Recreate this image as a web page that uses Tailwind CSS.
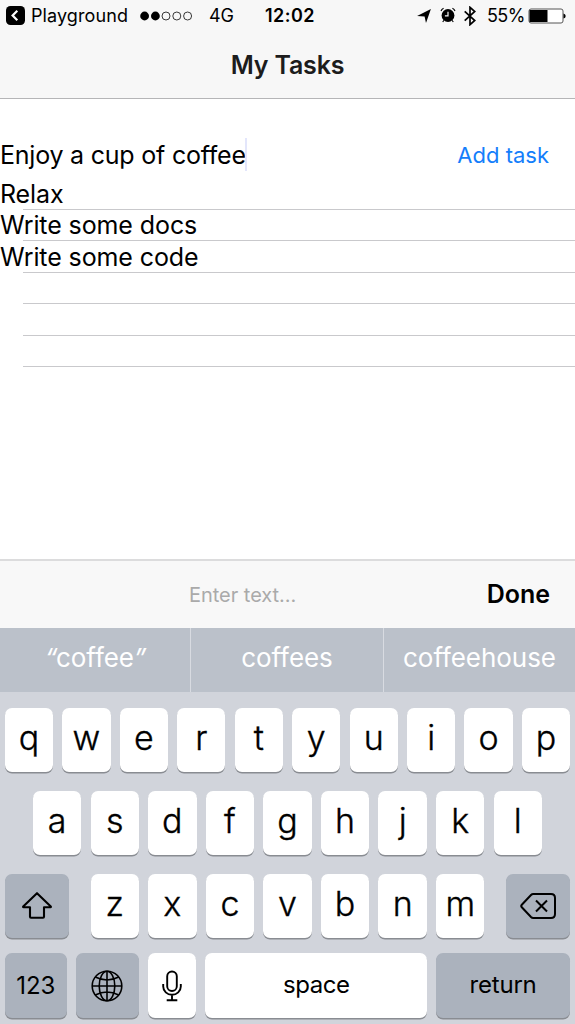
<!DOCTYPE html>
<html lang="en">
<head>
<meta charset="utf-8">
<meta name="viewport" content="width=device-width, initial-scale=1">
<title>My Tasks</title>
<script src="https://cdn.jsdelivr.net/npm/@tailwindcss/browser@4"></script>
</head>
<body class="w-[575px] h-[1024px] overflow-hidden bg-white text-black font-['Inter','Liberation_Sans',sans-serif] flex flex-col whitespace-nowrap">

<header class="h-[99px] shrink-0 bg-[#f7f7f7] border-b border-[#b5b5b7] flex flex-col">
  <div class="h-8 flex items-center text-[18px] leading-8">
    <svg class="ml-[6px] -mt-[2px] w-[19px] h-[19px] shrink-0" viewBox="0 0 19 19"><rect width="19" height="19" rx="4.5"/><path d="M11.3 4.8 6.6 9.5l4.7 4.7" fill="none" stroke="#fff" stroke-width="2.2"/></svg>
    <div class="ml-[6px] w-[109px] tracking-[0.100px]">Playground</div>
    <svg class="w-[53px] h-[10px] shrink-0" viewBox="0 0 53 10"><circle cx="4.6" cy="5" r="4.4"/><circle cx="15.4" cy="5" r="4.4"/><g fill="none" stroke="#222" stroke-width="0.9"><circle cx="26" cy="5" r="4"/><circle cx="36.8" cy="5" r="4"/><circle cx="47.6" cy="5" r="4"/></g></svg>
    <div class="ml-[16px] w-[56px] tracking-[-0.2px]">4G</div>
    <div class="w-[152px] font-semibold tracking-[0.450px]">12:02</div>
    <svg class="w-[14px] h-[14px] shrink-0" viewBox="0 0 14 14"><path d="M13.900 0 9 13.900 7.600 7.600.1 6.900z"/></svg>
    <svg class="ml-[9px] -mt-[2px] w-[16px] h-[16px] shrink-0" viewBox="0 0 16 16"><circle cx="8" cy="8.5" r="6.4"/><path d="M8 4.8v4H4.9" fill="none" stroke="#f7f7f7" stroke-width="1.2"/><path d="M1 4Q1.700 2 3.600 1.300M15 4Q14.300 2 12.400 1.300M4 13.200l-1.300 1.800M12 13.200l1.300 1.800" fill="none" stroke="#000" stroke-width="1.100"/></svg>
    <svg class="ml-[8px] w-[12px] h-[20px] shrink-0" viewBox="0 0 12 20"><path d="M.7 5.300 10.800 14.500 6 18.700V1.300l4.800 4.200L.7 14.700" fill="none" stroke="#000" stroke-width="1.700"/></svg>
    <div class="ml-[11px] w-[41px] tracking-[-0.600px]">55%</div>
    <svg class="w-[38px] h-[16px] shrink-0" viewBox="0 0 38 16"><rect x="1" y="1" width="34" height="14" rx="2" fill="#fff" stroke="#555" stroke-width="1"/><path d="M1.500 2h18v12h-18z"/><path d="M35.500 5.500q2.200.5 2.200 2.500t-2.200 2.500z"/></svg>
  </div>
  <h1 class="h-[66px] text-center text-[25px] leading-[66px] font-semibold text-[#1c1c1c] tracking-[-0.200px]">My Tasks</h1>
</header>

<main class="h-[460px] shrink-0 flex flex-col">
  <div class="mt-[38px] h-[34px] flex items-center justify-between pr-[26px]">
    <div class="flex items-center text-[25px] leading-[34px]">
      <span class="w-[245px] pt-[2px] tracking-[-0.220px]">Enjoy a cup of coffee</span><span class="w-[2px] h-[33px] bg-[#e3e6fb]"></span>
    </div>
    <button class="pt-[2px] text-[22px] leading-[34px] text-[#147efb] tracking-[0px]">Add task</button>
  </div>
  <ul class="mt-[8px] h-[190px] flex flex-col text-[25px] leading-[31px] tracking-[-0.100px]">
    <li class="h-[31px] flex flex-col"><span class="h-[30px]">Relax</span><i class="ml-[23px] h-px bg-[#c9c9cc]"></i></li>
    <li class="h-[31px] flex flex-col"><span class="h-[30px]">Write some docs</span><i class="ml-[23px] h-px bg-[#c9c9cc]"></i></li>
    <li class="h-[32px] flex flex-col"><span class="h-[31px] leading-[33px]">Write some code</span><i class="ml-[23px] h-px bg-[#c9c9cc]"></i></li>
    <li class="h-[31px] ml-[23px] border-b border-[#c9c9cc]"></li>
    <li class="h-[32px] ml-[23px] border-b border-[#c9c9cc]"></li>
    <li class="h-[31px] ml-[23px] border-b border-[#c9c9cc]"></li>
  </ul>
</main>

<div class="h-[69px] shrink-0 bg-[#f8f8f8] border-t-2 border-[#dcdcdd] grid grid-cols-[190px_1fr_auto] items-center pr-[25px]">
  <span></span>
  <span class="-ml-px text-[20px] text-[#aaaaaa] tracking-[-0.030px]">Enter text...</span>
  <button class="text-[25px] font-semibold tracking-[0px]">Done</button>
</div>

<section class="h-[396px] shrink-0 bg-[#d1d4db] flex flex-col">
  <div class="h-16 grid grid-cols-[191px_193px_191px] bg-[#bbc1ca] text-white text-[26px] leading-[60px] text-center tracking-[-0.050px]">
    <div class="border-r border-[#d8dbe1]"><span class="inline-block -skew-x-12">“</span>coffee<span class="inline-block -skew-x-12">”</span></div>
    <div class="border-r border-[#d8dbe1]">coffees</div>
    <div>coffeehouse</div>
  </div>

  <div class="mt-[16px] h-[64px] px-[4.800px] flex gap-[9.200px] text-[34px] leading-[60px] font-light [-webkit-text-stroke:0.350px_#000] text-center *:flex-1 *:rounded-[7px] *:bg-white *:shadow-[0_1.500px_0_#898c92]">
    <div>q</div><div>w</div><div>e</div><div>r</div><div>t</div><div>y</div><div>u</div><div>i</div><div>o</div><div>p</div>
  </div>

  <div class="mt-[19px] h-[64px] px-[33px] flex gap-[9.200px] text-[34px] leading-[60px] font-light [-webkit-text-stroke:0.350px_#000] text-center *:flex-1 *:rounded-[7px] *:bg-white *:shadow-[0_1.500px_0_#898c92]">
    <div>a</div><div>s</div><div>d</div><div>f</div><div>g</div><div>h</div><div>j</div><div>k</div><div>l</div>
  </div>

  <div class="mt-[19px] h-[64px] px-[5px] flex justify-between">
    <div class="w-[64px] rounded-[7px] bg-[#abb2bd] shadow-[0_1.500px_0_#898c92] flex items-center justify-center">
      <svg class="w-8 h-8" viewBox="0 0 32 32"><path d="M16 3.200 2.200 16.500q-.5.700.4.700H9v9.500q0 1 1 1h12q1 0 1-1v-9.500h6.400q.9 0 .4-.700z" fill="none" stroke="#000" stroke-width="2.100" stroke-linejoin="round"/></svg>
    </div>
    <div class="w-[394px] flex gap-[9.200px] text-[34px] leading-[60px] font-light [-webkit-text-stroke:0.350px_#000] text-center *:flex-1 *:rounded-[7px] *:bg-white *:shadow-[0_1.500px_0_#898c92]">
      <div>z</div><div>x</div><div>c</div><div>v</div><div>b</div><div>n</div><div>m</div>
    </div>
    <div class="w-[64px] rounded-[7px] bg-[#abb2bd] shadow-[0_1.500px_0_#898c92] flex items-center justify-center">
      <svg class="w-[36px] h-[28px]" viewBox="0 0 36 28"><path d="M13.200 2H31q4 0 4 4v16q0 4-4 4H13.200q-1.200 0-2.200-1L1.800 15.200q-1.100-1.200 0-2.400L11 3q1-1 2.200-1z" fill="none" stroke="#000" stroke-width="2"/><path d="m16 8.500 11 11m0-11-11 11" fill="none" stroke="#000" stroke-width="2"/></svg>
    </div>
  </div>

  <div class="mt-[15px] h-[65px] px-[5px] flex text-[24px] leading-[64px] text-center *:rounded-[7px] *:shadow-[0_1.500px_0_#898c92]">
    <div class="w-[61.500px] bg-[#abb2bd] leading-[66px]">123</div>
    <div class="ml-[9.500px] w-[62.500px] bg-[#abb2bd] flex items-center justify-center">
      <svg class="w-8 h-8" viewBox="0 0 32 32" fill="none" stroke="#000" stroke-width="1.600"><circle cx="16" cy="16" r="14.800"/><path d="M16 1.200v29.600M1.200 16h29.600M4.300 7q11.700 6 23.400 0M4.300 25q11.700-6 23.400 0"/><ellipse cx="16" cy="16" rx="7.800" ry="14.800"/></svg>
    </div>
    <div class="ml-[9.500px] w-[48.300px] bg-white flex items-center justify-center">
      <svg class="w-[20px] h-[32px]" viewBox="0 0 20 32" fill="none" stroke="#000" stroke-width="1.900"><rect x="5.200" y="1.500" width="9.600" height="19.500" rx="4.800"/><path d="M1.200 14v2.500a8.800 8.300 0 0 0 17.600 0V14M10 24.800v5M4.700 30.300h10.600"/></svg>
    </div>
    <div class="ml-[9.200px] w-[221.500px] bg-white tracking-[-0.500px]">space</div>
    <div class="ml-[9.200px] w-[133.800px] bg-[#abb2bd] tracking-[-0.200px]">return</div>
  </div>
</section>
</body>
</html>
